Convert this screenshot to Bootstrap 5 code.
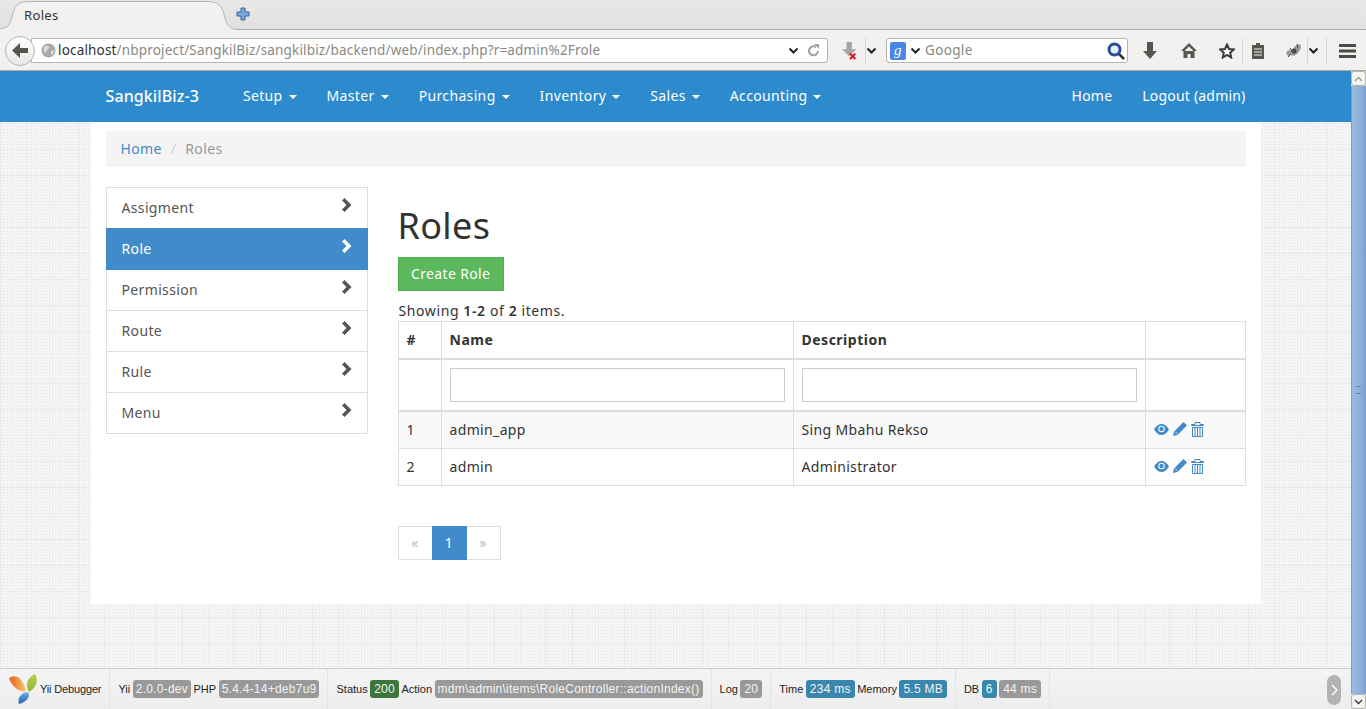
<!DOCTYPE html>
<html lang="en">
<head>
  <meta charset="UTF-8">
  <title>Roles</title>
  <link href="https://cdn.jsdelivr.net/npm/bootstrap@5.3.0/dist/css/bootstrap.min.css" rel="stylesheet">
  <style>
    html, body { height: 100%; overflow: hidden; }
    body { font-family: "Noto Sans", "Open Sans", sans-serif; font-size: 14px; letter-spacing: .025em; color: #333; background: #fff; }
    a { text-decoration: none; }

    /* browser chrome */
    .ff-tabs { height: 30px; background: linear-gradient(#e9e8e6, #e2e1df); border-bottom: 1px solid #a9a8a5; }
    .ff-tab { position: relative; width: 240px; height: 30px; padding: 6px 0 0 24px; font-size: 13px; color: #2e3436; }
    .ff-tab-shape { position: absolute; left: 0; top: 0; }
    .ff-tab-text { position: relative; }
    .ff-newtab { margin: 7px 0 0 -4px; }
    .ff-bar { height: 41px; padding-top: 1px; background: #f2f1ef; border-bottom: 1px solid #a9a8a5; }
    .ff-bar svg { flex: none; }
    .ff-back { width: 30px; height: 30px; border-radius: 50%; border: 1px solid #b5b4b1; background: linear-gradient(#fff, #e9e8e6); margin-left: 5px; z-index: 1; flex: none; }
    .ff-url { width: 797px; height: 25px; margin-left: -4px; background: #fff; border: 1px solid #b5b4b1; border-radius: 0 3px 3px 0; padding: 0 7px 0 9px; font-size: 13.5px; letter-spacing: .17px; color: #888a85; white-space: nowrap; flex: none; }
    .ff-url b { font-weight: 400; color: #2e3436; }
    .ff-globe { margin-right: 2px; }
    .ff-search { width: 242px; height: 25px; background: #fff; border: 1px solid #b5b4b1; border-radius: 3px; padding: 0 2px 0 3px; font-size: 13.5px; color: #888a85; flex: none; }
    .ff-g { width: 16px; height: 18px; background: #4a86e8; color: #fff; font: italic 15px "Liberation Serif", serif; text-align: center; border-radius: 2px; line-height: 16px; }
    .ff-sep { width: 1px; height: 26px; background: #d8d7d4; flex: none; }
    .gap-l5 { margin-left: 5px; }
    .gap-l7 { margin-left: 7px; }
    .gap-l8 { margin-left: 8px; }
    .gap-l9 { margin-left: 9px; }
    .gap-l12 { margin-left: 12px; }
    .gap-l14 { margin-left: 14px; }
    .gap-l15 { margin-left: 15px; }
    .gap-l20 { margin-left: 20px; }
    .gap-l22 { margin-left: 22px; }
    .gap-l24 { margin-left: 24px; }

    /* page */
    .pg-wrap { height: 638px; }
    .pg-view { flex: 1 1 auto; min-width: 0; overflow: hidden; position: relative;
      background-color: #f5f5f5;
      background-image:
        linear-gradient(#ebebeb 1px, transparent 1px),
        linear-gradient(90deg, #ebebeb 1px, transparent 1px),
        radial-gradient(#e4e4e4 .6px, transparent .7px);
      background-size: 26px 26px, 26px 26px, 3px 3px; }
    .sb-col { width: 15px; background: #dcdad5; }
    .sb-btn { height: 15px; background: #f5f4f2; border: 1px solid #b5b4b1; border-radius: 3px; }
    .sb-thumb { flex: 1 1 auto; background: linear-gradient(90deg, #9dbbe2, #8fb0dc 60%, #7fa3d3); border: 1px solid #7b9cc9; border-width: 0 1px; }
    .sb-grip { width: 5px; height: 8px; border-top: 1px solid #5f83b5; border-bottom: 1px solid #5f83b5; position: relative; }

    .top-nav { height: 51px; background: #2d8bcd; padding: 0; }
    .top-inner { width: 1170px; margin: 0 auto; padding: 0 15px; height: 51px; }
    .top-nav .navbar-brand { font-size: 16px; font-weight: 500; letter-spacing: .1px; color: #fff; padding: 0; margin: 0 29px 0 0; line-height: 49px; }
    .top-nav.navbar-expand .navbar-nav .nav-link { color: #fff; padding: 0 15px 2px; font-size: 14px; }
    .top-nav .dropdown-toggle::after { margin-left: 6px; vertical-align: 2px; border-top-width: 4px; border-right-width: 4px; border-left-width: 4px; }
    .nav-right { margin-right: -15px; letter-spacing: .2px; }
    .body-box { width: 1170px; height: 482px; margin: 0 auto; background: #fff; padding: 9px 15px 0; }
    .crumbs { height: 36px; background: #f4f4f4; padding: 0 15px 2px; margin: 0 0 20px; align-items: center; }
    .crumbs a { color: #428bca; }
    .crumbs .breadcrumb-item.active { color: #999; padding-left: 9px; }
    .crumbs .breadcrumb-item + .breadcrumb-item::before { color: #ccc; padding-right: 9px; }
    .side-col { width: 262px; margin-right: 30px; flex: none; }
    .side-col .list-group-item { height: 41px; padding: 0 15px 2px; border-color: #ddd; color: #555; border-radius: 0; }
    .side-col .list-group-item:first-child { height: 42px; }
    .side-col .list-group-item.active { height: 42px; background: #428bca; border-color: #428bca; color: #fff; }
    .main-col { flex: 1 1 auto; min-width: 0; }
    .main-col h1 { font-size: 36px; font-weight: 400; line-height: 40px; margin: 19px 0 11px; color: #333; }
    .add-btn { background: #5cb85c; border: 1px solid #4cae4c; color: #fff; border-radius: 0; font-size: 14px; height: 34px; padding: 0 12.500px; line-height: 32px; letter-spacing: inherit; }
    .summary-line { line-height: 20px; margin-top: 10px; padding-left: 1px; letter-spacing: .6px; }
    .summary-line b { font-weight: 600; }
    .grid-tbl { table-layout: fixed; width: 847px; border-color: #ddd; margin: 0; color: #333; --bs-table-border-color: #ddd; }
    .grid-tbl th, .grid-tbl td { padding: 8px; line-height: 20px; vertical-align: middle; }
    .grid-tbl thead th { font-weight: 700; letter-spacing: .5px; height: 37px; border-bottom-width: 2px; }
    .grid-tbl .w-num { width: 43px; }
    .grid-tbl .w-act { width: 100px; }
    .grid-tbl .w-txt { width: 352px; }
    .grid-tbl .filter-row td { height: 52px; }
    .grid-tbl .filter-row input { height: 34px; border-radius: 0; border: 1px solid #ccc; }
    .grid-tbl tbody tr.odd-row td { background: #f9f9f9; border-top-width: 2px; }
    .act-icons { height: 20px; padding-bottom: 2px; }
    .pager-box { margin: 40px 0 0; }
    .pager-box .page-link { border-radius: 0 !important; border-color: #ddd; color: #bbb; padding: 0; width: 35px; height: 34px; line-height: 32px; text-align: center; font-size: 14px; background: #fff; }
    .pager-box .active .page-link { background: #428bca; border-color: #428bca; color: #fff; }

    /* debug toolbar */
    .yii-bar { position: absolute; left: 0; right: 0; bottom: 0; height: 41px; background: linear-gradient(#f4f4f4, #ededed); border-top: 1px solid #ccc; font: 11px "Liberation Sans", sans-serif; letter-spacing: 0; color: #222; }
    .yii-block { height: 40px; padding: 0 8px; border-right: 1px solid #e4e4e4; gap: 2.500px; white-space: nowrap; }
    .yii-logo { padding-left: 9px; gap: 2px; }
    .yii-logo span { letter-spacing: -.15px; }
    .yii-tag { font: 12px "Liberation Sans", sans-serif; letter-spacing: .25px; color: #f4f4f4; background: #999; border-radius: 3px; padding: 0 4px; line-height: 18px; height: 18px; }
    .yii-long { padding: 0 3px; }
    .yii-ok { background: #3c763d; }
    .yii-info { background: #3a87ad; }
    .yii-min { position: absolute; right: 10px; top: 6px; width: 14px; height: 30px; border-radius: 8px; background: #b3b3b3; }
  </style>
</head>
<body>
  <!-- browser tabs -->
  <div class="ff-tabs d-flex">
    <div class="ff-tab">
      <svg class="ff-tab-shape" width="240" height="30" viewBox="0 0 240 30"><path d="M0 28.500C8 28.500 10 25 12 17 14 7 17 1.500 28 1.500H208C218 1.500 222 6 224 14 226 24 229 29.500 238 29.500V30H0z" fill="#f2f1ef"/><path d="M0 28.500C8 28.500 10 25 12 17 14 7 17 1.500 28 1.500H208C218 1.500 222 6 224 14 226 24 229 29.500 238 29.500" fill="none" stroke="#b5b4b1"/></svg>
      <span class="ff-tab-text">Roles</span>
    </div>
    <svg class="ff-newtab" width="14" height="14" viewBox="0 0 14 14"><path d="M5 1h4v4h4v4H9v4H5V9H1V5h4z" fill="#7ea6d8" stroke="#3465a4"/></svg>
  </div>
  <!-- browser toolbar -->
  <div class="ff-bar d-flex align-items-center">
    <div class="ff-back d-flex align-items-center justify-content-center">
      <svg width="17" height="15" viewBox="0 0 17 15"><path d="M8 0 0 7.500 8 15v-5h8V5H8z" fill="#555753"/></svg>
    </div>
    <div class="ff-url d-flex align-items-center">
      <svg class="ff-globe" width="15" height="15" viewBox="0 0 15 15"><circle cx="7.500" cy="7.500" r="7" fill="#a9a9a9"/><path d="M3 4c2-2 4-1 5 0s-1 2-2 3-1 4-3 2zM10 8l3-1-1 4-2 1z" fill="#dcdcdc"/></svg>
      <span><b>localhost</b>/nbproject/SangkilBiz/sangkilbiz/backend/web/index.php?r=admin%2Frole</span>
      <svg class="ms-auto" width="11" height="8" viewBox="0 0 11 8"><path d="M1.500 1.500 5.500 5.500l4-4" fill="none" stroke="#222" stroke-width="2"/></svg>
      <svg class="ms-2" width="13" height="13" viewBox="0 0 13 13"><path d="M11 7a4.500 4.500 0 1 1-2-4" fill="none" stroke="#9aa5ad" stroke-width="2.200"/><path d="M7 0h5v5z" fill="#9aa5ad"/></svg>
    </div>
    <svg class="gap-l14" width="16" height="22" viewBox="0 0 18 22"><path d="M5 1h6v8h5l-8 8-8-8h5z" fill="#a5a5a5"/><path d="m9 14 6 6m0-6-6 6" stroke="#d11" stroke-width="2.200"/></svg>
    <div class="ff-sep gap-l7"></div>
    <svg width="11" height="8" viewBox="0 0 11 8"><path d="M1.500 1.500 5.500 5.500l4-4" fill="none" stroke="#222" stroke-width="2"/></svg>
    <div class="ff-search d-flex align-items-center gap-l9">
      <span class="ff-g">g</span>
      <svg class="ms-1" width="11" height="8" viewBox="0 0 11 8"><path d="M1.500 1.500 5.500 5.500l4-4" fill="none" stroke="#222" stroke-width="2"/></svg>
      <span class="ms-1">Google</span>
      <svg class="ms-auto" width="18" height="18" viewBox="0 0 18 18"><circle cx="7.500" cy="7.500" r="5.500" fill="#e8eefa" stroke="#2a4a9a" stroke-width="3"/><path d="m12 12 5 5" stroke="#333" stroke-width="2.500"/></svg>
    </div>
    <svg class="gap-l15" width="14" height="17" viewBox="0 0 14 17"><path d="M4 0h6v9h4l-7 8-7-8h4z" fill="#555753"/></svg>
    <svg class="gap-l24" width="16" height="15" viewBox="0 0 16 15"><path d="M8 0 0 8h2.500v7h4v-4h3v4h4V8H16zM8 3.500 12 7.500V8H4v-.5z" fill="#555753"/></svg>
    <svg class="gap-l22" width="16" height="16" viewBox="0 0 16 16"><path d="m8 1.500 2 4.500 4.800.5-3.600 3.200 1 4.800L8 12l-4.200 2.500 1-4.800L1.200 6.500 6 6z" fill="#fff" stroke="#3a3c38" stroke-width="2"/></svg>
    <div class="ff-sep gap-l7"></div>
    <svg class="gap-l8" width="14" height="17" viewBox="0 0 14 17"><path d="M1 3h4V1h4v2h4v14H1z" fill="#555753"/><path d="M3 7h8M3 10h8M3 13h8" stroke="#f2f1ef"/></svg>
    <svg class="gap-l20" width="17" height="16" viewBox="0 0 17 16"><path d="M1 10c1-3 4-4 6-2l3-5 5-2 1 4-3 5-4 3-3-1-3 1z" fill="#9a9a9a"/><path d="M5 5l2 3M12 1l1 4M3 14l3-3" stroke="#444"/><circle cx="9" cy="8" r="2.500" fill="#4a4a4a"/></svg>
    <div class="ff-sep gap-l5"></div>
    <svg width="11" height="8" viewBox="0 0 11 8"><path d="M1.500 1.500 5.500 5.500l4-4" fill="none" stroke="#222" stroke-width="2"/></svg>
    <div class="ff-sep gap-l7"></div>
    <svg class="gap-l12" width="17" height="14" viewBox="0 0 17 14"><path d="M0 0h17v3H0zM0 5.500h17v3H0zM0 11h17v3H0z" fill="#4a4c48"/></svg>
  </div>

  <div class="pg-wrap d-flex">
    <div class="pg-view">
      <nav class="navbar top-nav navbar-expand">
        <div class="top-inner d-flex align-items-center">
          <a class="navbar-brand" href="#">SangkilBiz-3</a>
          <ul class="navbar-nav me-auto">
            <li class="nav-item"><a class="nav-link dropdown-toggle" href="#">Setup</a></li>
            <li class="nav-item"><a class="nav-link dropdown-toggle" href="#">Master</a></li>
            <li class="nav-item"><a class="nav-link dropdown-toggle" href="#">Purchasing</a></li>
            <li class="nav-item"><a class="nav-link dropdown-toggle" href="#">Inventory</a></li>
            <li class="nav-item"><a class="nav-link dropdown-toggle" href="#">Sales</a></li>
            <li class="nav-item"><a class="nav-link dropdown-toggle" href="#">Accounting</a></li>
          </ul>
          <ul class="navbar-nav nav-right">
            <li class="nav-item"><a class="nav-link" href="#">Home</a></li>
            <li class="nav-item"><a class="nav-link" href="#">Logout (admin)</a></li>
          </ul>
        </div>
      </nav>

      <div class="body-box">
        <ol class="breadcrumb crumbs">
          <li class="breadcrumb-item"><a href="#">Home</a></li>
          <li class="breadcrumb-item active">Roles</li>
        </ol>
        <div class="d-flex">
          <div class="side-col">
            <div class="list-group" id="side-menu"></div>
          </div>
          <div class="main-col">
            <h1>Roles</h1>
            <a class="btn add-btn" href="#">Create Role</a>
            <div class="summary-line">Showing <b>1-2</b> of <b>2</b> items.</div>
            <table class="table table-bordered grid-tbl">
              <thead>
                <tr><th class="w-num">#</th><th class="w-txt">Name</th><th class="w-txt">Description</th><th class="w-act"></th></tr>
              </thead>
              <tbody id="grid-body">
                <tr class="filter-row"><td></td><td><input class="form-control" type="text"></td><td><input class="form-control" type="text"></td><td></td></tr>
              </tbody>
            </table>
            <ul class="pagination pager-box">
              <li class="page-item disabled"><a class="page-link" href="#">«</a></li>
              <li class="page-item active"><a class="page-link" href="#">1</a></li>
              <li class="page-item disabled"><a class="page-link" href="#">»</a></li>
            </ul>
          </div>
        </div>
      </div>

      <div class="yii-bar d-flex">
        <div class="yii-block yii-logo d-flex align-items-center">
          <svg width="29" height="32" viewBox="0 0 29 32">
            <defs>
              <linearGradient id="leafA" x1="0" x2="1" y1="0" y2="0"><stop offset="0" stop-color="#e8611a"/><stop offset="1" stop-color="#f6c66a"/></linearGradient>
              <linearGradient id="leafB" x1="0" x2="0" y1="0" y2="1"><stop offset="0" stop-color="#b9cf4a"/><stop offset="1" stop-color="#8fb82f"/></linearGradient>
              <linearGradient id="leafC" x1="0" x2="0" y1="0" y2="1"><stop offset="0" stop-color="#6cb4e8"/><stop offset="1" stop-color="#1f62ad"/></linearGradient>
            </defs>
            <path d="M0 5C6 1 13 3 17 18 10 19 3 14 0 5z" fill="url(#leafA)"/>
            <path d="M26 1c4 7 1 14-6 18-4-7-2-14 6-18z" fill="url(#leafB)"/>
            <path d="M18 19c4 2 2 9-8 12-2-6 2-11 8-12z" fill="url(#leafC)"/>
          </svg>
          <span>Yii Debugger</span>
        </div>
        <div class="yii-block d-flex align-items-center">Yii <span class="yii-tag yii-long">2.0.0-dev</span> PHP <span class="yii-tag yii-long">5.4.4-14+deb7u9</span></div>
        <div class="yii-block d-flex align-items-center">Status <span class="yii-tag yii-ok">200</span> Action <span class="yii-tag yii-long">mdm\admin\items\RoleController::actionIndex()</span></div>
        <div class="yii-block d-flex align-items-center">Log <span class="yii-tag">20</span></div>
        <div class="yii-block d-flex align-items-center">Time <span class="yii-tag yii-info">234 ms</span> Memory <span class="yii-tag yii-info">5.5 MB</span></div>
        <div class="yii-block d-flex align-items-center">DB <span class="yii-tag yii-info">6</span> <span class="yii-tag">44 ms</span></div>
        <div class="yii-min d-flex align-items-center justify-content-center">
          <svg width="7" height="12" viewBox="0 0 7 12"><path d="m1 1 5 5-5 5" fill="none" stroke="#fff" stroke-width="1.500"/></svg>
        </div>
      </div>
    </div>
    <div class="sb-col d-flex flex-column">
      <div class="sb-btn d-flex align-items-center justify-content-center">
        <svg width="9" height="6" viewBox="0 0 9 6"><path d="m1 5 3.500-3.500L8 5" fill="none" stroke="#999" stroke-width="1.300"/></svg>
      </div>
      <div class="sb-thumb d-flex align-items-center justify-content-center"><div class="sb-grip"></div></div>
      <div class="sb-btn d-flex align-items-center justify-content-center">
        <svg width="9" height="6" viewBox="0 0 9 6"><path d="m1 1 3.500 3.500L8 1" fill="none" stroke="#333" stroke-width="1.300"/></svg>
      </div>
    </div>
  </div>

  <script src="https://cdn.jsdelivr.net/npm/bootstrap@5.3.0/dist/js/bootstrap.bundle.min.js"></script>
  <script>
    const chevron = '<svg class="ms-auto mb-1" width="11" height="14" viewBox="0 0 11 14"><path d="M3.500 0 10.500 7l-7 7L1 11.500 5.500 7 1 2.500z" fill="currentColor"/></svg>';
    const menuItems = ["Assigment", "Role", "Permission", "Route", "Rule", "Menu"];
    document.getElementById("side-menu").innerHTML = menuItems.map(m =>
      `<a href="#" class="list-group-item d-flex align-items-center ${m === "Role" ? "active" : ""}">${m}${chevron}</a>`).join("");

    const actionIcons = `<div class="act-icons d-flex align-items-center gap-1">
      <svg width="15" height="11" viewBox="0 0 15 11"><path d="M0 5.500C2 2 4.500 0 7.500 0s5.500 2 7.500 5.500C13 9 10.500 11 7.500 11S2 9 0 5.500z" fill="#428bca"/><circle cx="7.500" cy="5" r="3.200" fill="#fff"/><circle cx="7.500" cy="5" r="2.200" fill="#428bca"/></svg>
      <svg width="14" height="14" viewBox="0 0 14 14"><path d="M10.500 0 14 3.500 4.500 13 0 14l1-4.500z" fill="#428bca"/><path d="M2 9.500 4.500 12" stroke="#fff" stroke-width=".7"/></svg>
      <svg width="13" height="15" viewBox="0 0 13 15"><path d="M4 .5h5v2h3.500v1H.5v-1H4z" fill="none" stroke="#428bca"/><path d="M1.500 5.500h10v9h-10zM4 6v8M6.500 6v8M9 6v8" fill="none" stroke="#428bca"/></svg>
    </div>`;
    const roles = [["1", "admin_app", "Sing Mbahu Rekso"], ["2", "admin", "Administrator"]];
    document.getElementById("grid-body").insertAdjacentHTML("beforeend", roles.map((r, i) =>
      `<tr class="${i === 0 ? "odd-row" : ""}"><td>${r[0]}</td><td>${r[1]}</td><td>${r[2]}</td><td>${actionIcons}</td></tr>`).join(""));
  </script>
</body>
</html>
